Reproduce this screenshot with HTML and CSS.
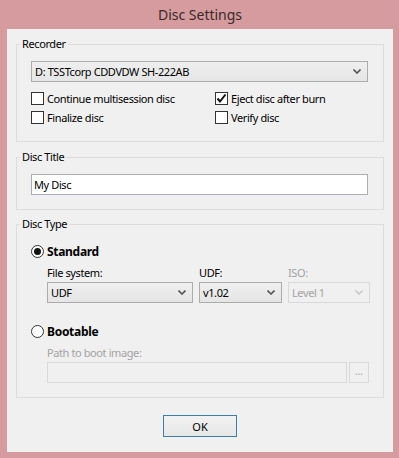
FILE: index.html
```html
<!DOCTYPE html>
<html lang="en">
<head>
    <meta charset="UTF-8">
    <title>Disc Settings</title>
    <link rel="stylesheet" href="styles.css">
</head>
<body>
    <div class="window">
        <div class="titlebar">Disc Settings</div>

        <div class="client">
            <!-- Recorder -->
            <fieldset class="group group-recorder">
                <legend>Recorder</legend>
                <div class="group-body">
                    <div class="combo combo-wide">
                        <span>D: TSSTcorp CDDVDW SH-222AB</span>
                        <svg class="chevron" width="8" height="5" viewBox="0 0 8 5"><path d="M0.5 0.5 L4 4 L7.5 0.5" fill="none" stroke="#555" stroke-width="1.6"/></svg>
                    </div>
                    <div class="check-grid">
                        <label class="check"><span class="box"></span>Continue multisession disc</label>
                        <label class="check"><span class="box checked"><svg width="11" height="11" viewBox="0 0 11 11"><path d="M1.5 5.5 L4 8.5 L9.5 1.5" fill="none" stroke="#111" stroke-width="2"/></svg></span>Eject disc after burn</label>
                        <label class="check"><span class="box"></span>Finalize disc</label>
                        <label class="check"><span class="box"></span>Verify disc</label>
                    </div>
                </div>
            </fieldset>

            <!-- Disc Title -->
            <fieldset class="group group-title">
                <legend>Disc Title</legend>
                <div class="group-body">
                    <div class="textbox">My Disc</div>
                </div>
            </fieldset>

            <!-- Disc Type -->
            <fieldset class="group group-type">
                <legend>Disc Type</legend>
                <div class="group-body">
                    <label class="radio"><span class="dot checked"></span>Standard</label>
                    <div class="fs-grid">
                        <div class="field">
                            <span class="caption">File system:</span>
                            <div class="combo">
                                <span>UDF</span>
                                <svg class="chevron" width="8" height="5" viewBox="0 0 8 5"><path d="M0.5 0.5 L4 4 L7.5 0.5" fill="none" stroke="#555" stroke-width="1.6"/></svg>
                            </div>
                        </div>
                        <div class="field">
                            <span class="caption">UDF:</span>
                            <div class="combo">
                                <span>v1.02</span>
                                <svg class="chevron" width="8" height="5" viewBox="0 0 8 5"><path d="M0.5 0.5 L4 4 L7.5 0.5" fill="none" stroke="#555" stroke-width="1.6"/></svg>
                            </div>
                        </div>
                        <div class="field disabled">
                            <span class="caption">ISO:</span>
                            <div class="combo">
                                <span>Level 1</span>
                                <svg class="chevron" width="8" height="5" viewBox="0 0 8 5"><path d="M0.5 0.5 L4 4 L7.5 0.5" fill="none" stroke="#c4c4c4" stroke-width="1.4"/></svg>
                            </div>
                        </div>
                    </div>

                    <label class="radio radio-boot"><span class="dot"></span>Bootable</label>
                    <div class="boot-path disabled">
                        <span class="caption">Path to boot image:</span>
                        <div class="path-row">
                            <div class="textbox path-box"></div>
                            <div class="browse">...</div>
                        </div>
                    </div>
                </div>
            </fieldset>

            <div class="actions">
                <button class="ok-btn">OK</button>
            </div>
        </div>
    </div>
</body>
</html>
```

FILE: styles.css
```css
:root {
    --frame: #d59b9e;
    --face: #f0f0f0;
    --group-line: #dcdcdc;
    --ctl-border: #acacac;
    --text: #000;
    --disabled: #a3a3a3;
}

body {
    margin: 0;
    background: var(--frame);
    font-family: "Noto Sans", "Open Sans", sans-serif;
    font-size: 11px;
    letter-spacing: -0.4px;
    color: var(--text);
}

.window {
    width: 399px;
    height: 458px;
    background: var(--frame);
    box-sizing: border-box;
    padding: 0 6px 6px 7px;
}

/* Title bar */
.titlebar {
    height: 29px;
    line-height: 29px;
    text-align: center;
    font-size: 14px;
    letter-spacing: 0;
    color: #3a2a2b;
}

.client {
    height: 423px;
    background: var(--face);
    box-sizing: border-box;
    padding: 7px 9px 0 9px;
    display: flex;
    flex-direction: column;
}

/* Group boxes */
.group {
    margin: 0;
    padding: 0;
    border: 1px solid var(--group-line);
    min-width: 0;
}

.group legend {
    margin-left: 3px;
    padding: 0 2px;
    line-height: 16px;
}

.group-body {
    padding: 0 14px;
}

.group-recorder {
    height: 106px;
    box-sizing: border-box;
}

.group-recorder .group-body {
    padding-top: 9px;
}

.group-title {
    margin-top: 7px;
    height: 61px;
    box-sizing: border-box;
}

.group-title .group-body {
    padding-top: 9px;
}

.group-type {
    margin-top: 6px;
    height: 182px;
    box-sizing: border-box;
}

.group-type .group-body {
    padding-top: 10px;
}

/* Combo boxes */
.combo {
    height: 21px;
    box-sizing: border-box;
    border: 1px solid var(--ctl-border);
    background: linear-gradient(#efefef, #e5e5e5);
    display: flex;
    align-items: center;
    justify-content: space-between;
    padding: 0 6px 0 3px;
}

.combo-wide {
    width: 337px;
}

.chevron {
    flex-shrink: 0;
}

/* Checkboxes */
.check-grid {
    display: grid;
    grid-template-columns: 184px 1fr;
    grid-auto-rows: 19px;
    margin-top: 7px;
}

.check {
    display: flex;
    align-items: center;
    gap: 3px;
}

.box {
    width: 13px;
    height: 13px;
    box-sizing: border-box;
    border: 1px solid #333;
    background: #fff;
    display: flex;
    align-items: center;
    justify-content: center;
}

/* Text boxes */
.textbox {
    width: 337px;
    height: 21px;
    box-sizing: border-box;
    border: 1px solid #abadb3;
    background: #fff;
    line-height: 19px;
    padding-left: 2px;
}

/* Radios */
.radio {
    display: flex;
    align-items: center;
    gap: 3px;
    height: 19px;
    font-weight: bold;
    font-size: 12px;
    letter-spacing: -0.3px;
}

.dot {
    width: 13px;
    height: 13px;
    box-sizing: border-box;
    border: 1px solid #333;
    border-radius: 50%;
    background: #fff;
    display: flex;
    align-items: center;
    justify-content: center;
}

.dot.checked::after {
    content: "";
    width: 7px;
    height: 7px;
    border-radius: 50%;
    background: #111;
}

.radio-boot {
    margin-top: 19px;
}

/* File system row */
.fs-grid {
    display: grid;
    grid-template-columns: 146px 83px 82px;
    column-gap: 6px;
    margin: 2px 0 0 16px;
}

.field {
    display: flex;
    flex-direction: column;
}

.caption {
    height: 19px;
    line-height: 19px;
}

.disabled .caption,
.disabled .combo span {
    color: var(--disabled);
}

.disabled .combo {
    background: var(--face);
    border-color: #d9d9d9;
}

/* Boot image path */
.boot-path {
    margin: 2px 0 0 16px;
}

.path-row {
    display: flex;
    gap: 2px;
}

.path-box {
    width: 300px;
    background: var(--face);
    border-color: #d9d9d9;
}

.browse {
    width: 20px;
    height: 21px;
    box-sizing: border-box;
    border: 1px solid #d9d9d9;
    color: var(--disabled);
    text-align: center;
    line-height: 17px;
    font-size: 10px;
    letter-spacing: 0;
}

/* Bottom buttons */
.actions {
    display: flex;
    justify-content: center;
    padding-top: 17px;
}

.ok-btn {
    width: 74px;
    height: 22px;
    border: 1px solid #3c7fb1;
    background: linear-gradient(#f2f2f2, #e6e6e6);
    font-family: inherit;
    font-size: 11px;
    letter-spacing: 0;
    padding: 0;
}
```
